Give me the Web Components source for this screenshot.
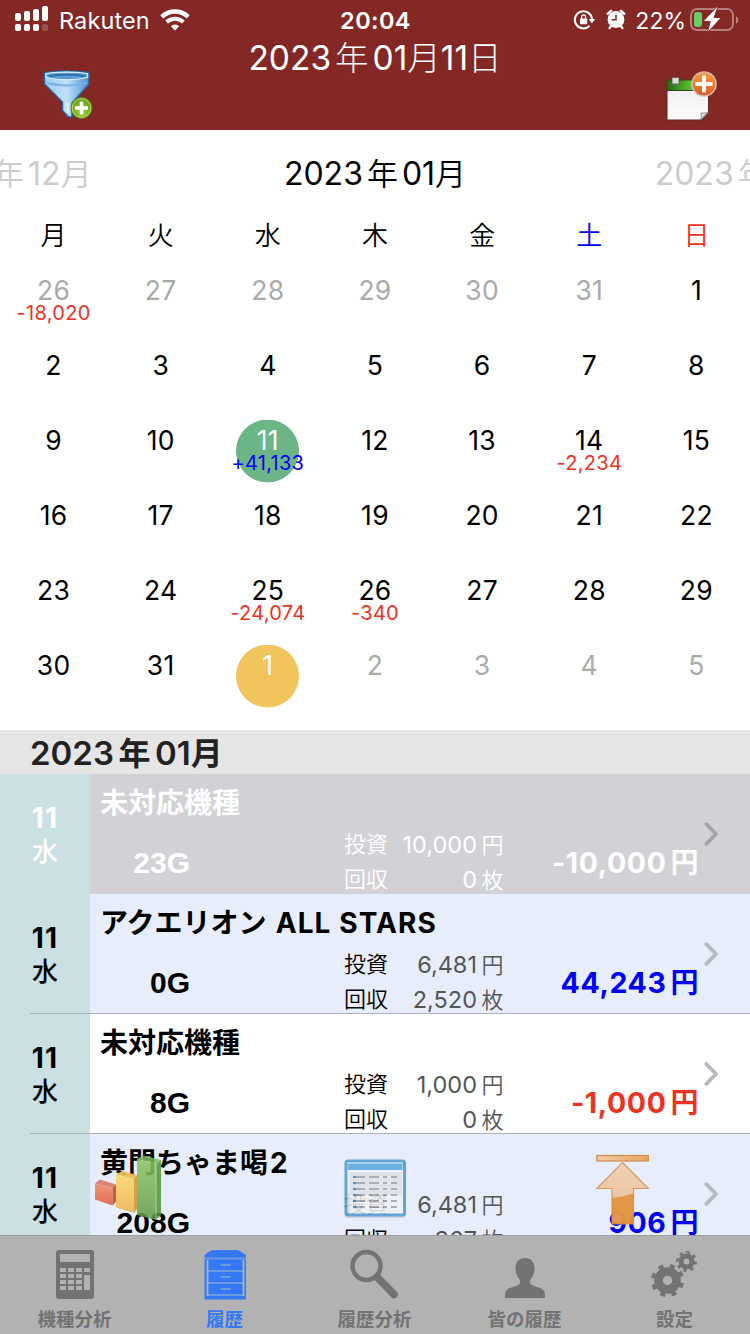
<!DOCTYPE html>
<html lang="ja">
<head>
<meta charset="utf-8">
<title>履歴</title>
<style>
  body {
    margin: 0;
    width: 750px;
    height: 1334px;
    overflow: hidden;
    background: #fff;
    font-family: Inter, "Noto Sans CJK JP", sans-serif;
  }
</style>
</head>
<body>
<history-app></history-app>

<script>
const ICONS = {
  signal: `<svg width="34" height="26" viewBox="0 0 34 26" fill="#fff">
    <rect x="0" y="7" width="6" height="8" rx="2"/><rect x="9" y="5" width="6" height="10" rx="2"/>
    <rect x="18" y="3" width="6" height="12" rx="2"/><rect x="27" y="0" width="6" height="15" rx="2"/>
    <rect x="0" y="18" width="6" height="7" rx="2"/><rect x="9" y="18" width="6" height="7" rx="2"/>
    <rect x="18" y="18" width="6" height="7" rx="2"/><rect x="27" y="18" width="6" height="7" rx="2" opacity=".2"/>
  </svg>`,
  wifi: `<svg width="30" height="22" viewBox="0 0 30 22" fill="none" stroke="#fff">
    <path d="M1.800 7.800a19 19 0 0 1 26.400 0" stroke-width="4.400"/>
    <path d="M6.600 13a12.200 12.200 0 0 1 16.800 0" stroke-width="4"/>
    <path d="M10.800 17.200a6.200 6.200 0 0 1 8.400 0L15 21.600z" fill="#fff" stroke="none"/>
  </svg>`,
  lock: `<svg width="22" height="20" viewBox="0 0 22 20">
    <path d="M15.600 15.800A8.600 8.600 0 1 1 18 9" fill="none" stroke="#fff" stroke-width="2"/>
    <path d="M14.600 9h6.600l-3.300 4.200z" fill="#fff"/>
    <rect x="6" y="8.600" width="7.200" height="5.600" rx="1" fill="#fff"/>
    <path d="M7.600 9V7a2 2 0 0 1 4 0v2" fill="none" stroke="#fff" stroke-width="1.300"/>
  </svg>`,
  alarm: `<svg width="20" height="20" viewBox="0 0 20 20">
    <circle cx="10" cy="10.500" r="8.400" fill="#fff"/>
    <path d="M1.600 4.800L5 1.800M18.400 4.800L15 1.800M3.600 19l2-2.600M16.400 19l-2-2.600" stroke="#fff" stroke-width="2.400" stroke-linecap="round"/>
    <path d="M10 5.400v5.400H5.600" fill="none" stroke="#832825" stroke-width="1.500"/>
  </svg>`,
  battery: `<svg width="50" height="26" viewBox="0 0 50 26">
    <rect x="1" y="2" width="42" height="21" rx="6" fill="none" stroke="#b57f7d" stroke-width="2"/>
    <path d="M46 9v8q2.400-1.400 2.400-4T46 9z" fill="#b57f7d"/>
    <rect x="4" y="5" width="8" height="15" rx="3" fill="#67ce67"/>
    <path d="M27 -.5L13 14.500h7.200L17.200 26 31.500 10.500h-7.400L28 -.5z" fill="#fff" stroke="#832825" stroke-width="1"/>
  </svg>`,
  filter: `<svg width="52" height="52" viewBox="0 0 52 52">
    <defs>
      <linearGradient id="f" x1="0" x2="1"><stop offset="0" stop-color="#9ccbf0"/><stop offset=".5" stop-color="#c0e0f8"/><stop offset="1" stop-color="#4e90cf"/></linearGradient>
      <radialGradient id="g" cx=".5" cy=".7"><stop offset="0" stop-color="#a4cc3a"/><stop offset="1" stop-color="#6fa81f"/></radialGradient>
    </defs>
    <path d="M1.500 2.500Q24 -.5 46 2.500V14L29 33v14.500l-4-1-5.500-6V32L1.500 14z" fill="url(#f)" stroke="#27639f" stroke-width="1.400"/>
    <path d="M3 3.500Q24 .8 44.500 3.500V7.500Q24 12 3 7.500z" fill="#5d9cd0" stroke="#d9effc" stroke-width="1.200"/>
    <path d="M6 6Q24 3.500 42 6" stroke="#2f6ea8" stroke-width="2" fill="none"/>
    <path d="M4 13Q24 18 44 13" stroke="#79b2e3" stroke-width="2" fill="none"/>
    <path d="M23 32v9l3 3V32z" fill="#d5ebfb"/>
    <circle cx="38.500" cy="38" r="10.500" fill="url(#g)" stroke="#558414" stroke-width="1"/>
    <circle cx="38.500" cy="38" r="9.300" fill="none" stroke="#b6d863" stroke-width="1"/>
    <path d="M38.500 31.500v13M32 38h13" stroke="#fff" stroke-width="3.600"/>
  </svg>`,
  addDay: `<svg width="52" height="52" viewBox="0 0 52 52">
    <defs>
      <linearGradient id="p" x2="0" y2="1"><stop offset="0" stop-color="#f0f0f0"/><stop offset="1" stop-color="#fdfdfd"/></linearGradient>
      <linearGradient id="h" x1="0" x2="1"><stop offset="0" stop-color="#256b18"/><stop offset=".6" stop-color="#62c52f"/><stop offset="1" stop-color="#4fae23"/></linearGradient>
      <linearGradient id="o" x2="0" y2="1"><stop offset="0" stop-color="#f0a03c"/><stop offset="1" stop-color="#df5527"/></linearGradient>
    </defs>
    <path d="M1 20H42.500v22l-8 8H1z" fill="url(#p)" stroke="#5c2422" stroke-width="1"/>
    <path d="M1 10H42.500V20.500H1z" fill="url(#h)" stroke="#2c4812" stroke-width="1"/>
    <path d="M42.500 42l-8 8q1.500-4 .5-7 4 .8 7.500-1z" fill="#ddd" stroke="#777" stroke-width=".8"/>
    <rect x="6" y="7.500" width="7" height="6.500" fill="#ddd" stroke="#555" stroke-width=".8"/>
    <circle cx="38" cy="14" r="12" fill="url(#o)" stroke="#d4bdb2" stroke-width="1.600"/>
    <path d="M38 5.500v17M29.500 14h17" stroke="#fff" stroke-width="3.800"/>
  </svg>`,
  chevron: `<svg width="18" height="28" viewBox="0 0 18 28" fill="none" stroke="currentColor" stroke-width="3.800" stroke-linecap="round" stroke-linejoin="round">
    <path d="M4.300 4L14 14 4.300 24"/>
  </svg>`,
  bars: `<svg width="68" height="68" viewBox="0 0 68 68">
    <defs>
      <linearGradient id="r" x2="0" y2="1"><stop offset="0" stop-color="#f0936a"/><stop offset="1" stop-color="#e2634e"/></linearGradient>
      <linearGradient id="y" x2="0" y2="1"><stop offset="0" stop-color="#f8da70"/><stop offset="1" stop-color="#efb75a"/></linearGradient>
      <linearGradient id="n" x2="0" y2="1"><stop offset="0" stop-color="#8cc563"/><stop offset="1" stop-color="#629b47"/></linearGradient>
    </defs>
    <g opacity=".94">
      <path d="M1 28.500l5-4 16 5-3.500 3.500z" fill="#d98069"/><path d="M1 28.500l17.500 4.500v17.500L1 44.500z" fill="url(#r)"/><path d="M18.500 33l3.500-3.500v17l-3.500 4z" fill="#c7503f"/>
      <path d="M22 19.500L28 16l15 4-3 4z" fill="#e9be52"/><path d="M22 19.500l18 4.500v34L22 52.500z" fill="url(#y)"/><path d="M40 24l3-4v34l-3 4z" fill="#d79c40"/>
    </g>
    <g opacity=".86">
      <path d="M43 4l6-3.500L67 5l-5 4z" fill="#79b85a"/><path d="M43 4l19 5v56l-19-5z" fill="url(#n)"/><path d="M62 9l5-4v55l-5 5z" fill="#4f973a"/>
      <path d="M43 4l19 5v55" fill="none" stroke="#a5cf86" stroke-width="1"/>
    </g>
  </svg>`,
  table: `<svg width="64" height="62" viewBox="0 0 64 62">
    <g opacity=".88">
      <rect x="1" y="4" width="61" height="55" rx="3" fill="#8c99b4" opacity=".35"/>
      <rect x="2" y="2" width="58.500" height="54" rx="2" fill="#f2f5fa" stroke="#509cce" stroke-width="3"/>
      <rect x="4" y="3.500" width="54.500" height="7.500" fill="#5ba8de"/><path d="M3.500 4h55.500" stroke="#9dd0ef" stroke-width="2"/>
      <rect x="5" y="13" width="53" height="39" fill="#dfe1e7"/><rect x="5" y="36" width="53" height="17" fill="#eff1f5"/>
      <g stroke="#a3a6ae" stroke-width="2.200">
        ${[18, 24, 30, 36, 42, 48].map(y => `<path d="M12 ${y}h9M25 ${y}h10M39 ${y}h4M47 ${y}h6"/><path d="M9 ${y}h3" stroke="#3f86d2"/>`).join('')}
      </g>
    </g>
  </svg>`,
  toTop: `<svg width="54" height="72" viewBox="0 0 54 72">
    <defs>
      <linearGradient id="t" x1="0" x2="1"><stop offset="0" stop-color="#f1c9a4"/><stop offset="1" stop-color="#e6a75c"/></linearGradient>
      <linearGradient id="u" x2="0" y2="1"><stop offset="0" stop-color="#f2cdb0"/><stop offset="1" stop-color="#ebb578"/></linearGradient>
    </defs>
    <rect x=".8" y="1.500" width="51.500" height="5.500" fill="url(#t)" stroke="#cf8d52" stroke-width="1.200"/>
    <path d="M26.500 8.500L52.300 34.500H37.500V70H16V34.500H.8z" fill="url(#u)" stroke="#d48f4e" stroke-width="1.200" opacity=".85"/>
    <path d="M16 44q12-1 21.500-5v31H16z" fill="#dd8c32" opacity=".8"/>
    <circle cx="21" cy="64" r="5" fill="#e89b62" opacity=".5"/>
  </svg>`,
  calc: `<svg width="50" height="52" viewBox="0 0 50 52">
    <rect x="6" y="1" width="38" height="49" rx="3" fill="currentColor"/>
    <g fill="#b2b2b2">
      <rect x="10" y="5" width="30" height="8"/>
      ${[19, 25, 31, 37].map(y => `<rect x="10" y="${y}" width="6" height="4"/><rect x="18" y="${y}" width="6" height="4"/><rect x="26" y="${y}" width="6" height="4"/>`).join('')}
      <rect x="34" y="19" width="6" height="4"/><rect x="34" y="26" width="6" height="15"/>
    </g>
  </svg>`,
  drawers: `<svg width="50" height="52" viewBox="0 0 50 52">
    <path d="M4.500 6l7.500-5h26l8 5v44.500H4.500z" fill="currentColor"/>
    <path d="M4.500 9.500h41.500M8 22h35M8 34h35M8 46h35M20.500 16h10M20.500 28h10M20.500 40h10" stroke="#6a9cdf" stroke-width="1.800"/>
    <path d="M7.500 11v36M43.500 11v36" stroke="#a9b6cc" stroke-width="1.800"/>
  </svg>`,
  search: `<svg width="50" height="52" viewBox="0 0 50 52" fill="none" stroke="currentColor">
    <circle cx="16.500" cy="17" r="14" stroke-width="4.400"/>
    <path d="M27 28L44 45.500" stroke-width="7.600" stroke-linecap="round"/>
  </svg>`,
  person: `<svg width="50" height="52" viewBox="0 0 50 52">
    <path d="M25 9c6 0 9.500 4 9.500 10.500 0 5-2 8.500-4.500 11.500v2.500c0 1.500 1 2.300 3 3l7 2.500c3.500 1.300 5 3.500 5 7V49H5v-3c0-3.500 1.500-5.700 5-7l7-2.500c2-.7 3-1.500 3-3V31c-2.500-3-4.500-6.500-4.500-11.500C15.500 13 19 9 25 9z" fill="currentColor"/>
  </svg>`,
  gears: `<svg width="50" height="52" viewBox="0 0 50 52" fill="none" stroke="currentColor">
    <circle cx="17.500" cy="31.500" r="9" stroke-width="8.600"/>
    <circle cx="17.500" cy="31.500" r="14.600" stroke-width="4" pathLength="80" stroke-dasharray="4.400 5.600" stroke-dashoffset="-2"/>
    <circle cx="36.500" cy="12.500" r="5.500" stroke-width="5"/>
    <circle cx="36.500" cy="12.500" r="9" stroke-width="3" pathLength="80" stroke-dasharray="4.500 5.500"/>
  </svg>`
}

// wraps unit characters, which sit a little apart from the digits beside them
const units = text => text.replace(/[年月日円枚]/g, char => `<span class="${char === '年' ? 'unit year' : 'unit'}">${char}</span>`)

class AppIcon extends HTMLElement {
  constructor () {
    super()
    this.attachShadow({ mode: 'open' })
  }

  connectedCallback () {
    this.shadowRoot.innerHTML = `
      <style>
        :host { display: block; flex: none; }
        svg { display: block; overflow: visible; }
      </style>
      ${ICONS[this.getAttribute('name')]}
    `
  }
}

class StatusBar extends HTMLElement {
  constructor () {
    super()
    this.attachShadow({ mode: 'open' })
  }

  connectedCallback () {
    this.shadowRoot.innerHTML = `
      <style>
        :host {
          display: grid;
          grid-template-columns: 1fr auto 1fr;
          height: 40px;
          line-height: 41px;
          font-size: 23.5px;
          color: #fff;
        }
        .side { display: flex; }
        .left { padding-left: 15px; }
        .right { justify-content: flex-end; padding-right: 10px; }
        .signal { margin: 6px 10px 0 0; }
        .carrier { width: 100.5px; letter-spacing: 0.1px; }
        .wifi { margin-top: 9px; }
        .time { font-weight: 600; letter-spacing: 0.4px; padding-left: 1px; }
        .lock { margin: 10px 10px 0 0; }
        .alarm { margin: 9px 9px 0 0; }
        .percent { margin-right: 4px; font-size: 23px; line-height: 42px; }
        .battery { margin-top: 7px; }
      </style>
      <div class="side left">
        <app-icon class="signal" name="signal"></app-icon>
        <span class="carrier">Rakuten</span>
        <app-icon class="wifi" name="wifi"></app-icon>
      </div>
      <span class="time">20:04</span>
      <div class="side right">
        <app-icon class="lock" name="lock"></app-icon>
        <app-icon class="alarm" name="alarm"></app-icon>
        <span class="percent">22%</span>
        <app-icon class="battery" name="battery"></app-icon>
      </div>
    `
  }
}

class NavHeader extends HTMLElement {
  constructor () {
    super()
    this.attachShadow({ mode: 'open' })
  }

  connectedCallback () {
    this.shadowRoot.innerHTML = `
      <style>
        :host { display: block; height: 130px; background: #832825; color: #fff; }
        .nav { display: grid; grid-template-columns: 1fr auto 1fr; }
        .title { line-height: 37px; font-size: 33.5px; }
        .unit { font-weight: 300; }
        .year { margin: 0 4px; }
        app-icon { margin: 30px 0 0 43px; }
        app-icon:last-child { justify-self: end; margin: 30px 32px 0 0; }
      </style>
      <status-bar></status-bar>
      <div class="nav">
        <app-icon name="filter"></app-icon>
        <span class="title">${units(this.getAttribute('date'))}</span>
        <app-icon name="addDay"></app-icon>
      </div>
    `
  }
}

class CalendarDay extends HTMLElement {
  constructor () {
    super()
    this.attachShadow({ mode: 'open' })
  }

  connectedCallback () {
    const sum = this.getAttribute('sum') || ''
    this.shadowRoot.innerHTML = `
      <style>
        :host {
          display: flex;
          flex-direction: column;
          align-items: center;
          height: 75px;
          padding-top: 5px;
          box-sizing: border-box;
          font-size: 26.5px;
          color: #000;
          background: radial-gradient(circle 32px at 50% 31px, var(--dot, transparent) 31px, transparent 31.8px);
        }
        :host([out]) { color: #aaa; }
        :host([mark=today]) { --dot: #f2c55c; color: #fff; }
        :host([mark=selected]) { --dot: #6cb587; color: #fff; }
        .day { line-height: 31px; letter-spacing: 0.3px; }
        .sum {
          line-height: 15px;
          font-size: 20px;
          letter-spacing: 0.3px;
          white-space: nowrap;
          color: ${sum[0] === '+' ? '#0000f5' : '#ea3323'};
        }
      </style>
      <span class="day"><slot></slot></span>
      <span class="sum">${sum}</span>
    `
  }
}

class MonthCalendar extends HTMLElement {
  constructor () {
    super()
    this.attachShadow({ mode: 'open' })
  }

  connectedCallback () {
    const sums = { 0: '-18,020', 16: '+41,133', 19: '-2,234', 30: '-24,074', 31: '-340' }
    const marks = { 16: 'selected', 37: 'today' }
    let days = ''
    for (let i = 0; i < 42; i++) {
      const date = new Date(2022, 11, 26 + i)
      days += `<calendar-day ${date.getMonth() !== 0 ? 'out' : ''}
        ${sums[i] ? `sum="${sums[i]}"` : ''} ${marks[i] ? `mark="${marks[i]}"` : ''}>${date.getDate()}</calendar-day>`
    }
    this.shadowRoot.innerHTML = `
      <style>
        :host { display: block; height: 600px; overflow: hidden; background: #fff; }
        .months { display: flex; justify-content: center; line-height: 88px; font-size: 32px; }
        .months div { flex: none; width: 374px; text-align: center; color: #ccc; }
        .months .current { color: #000; }
        .unit { font-size: 31px; font-weight: 350; }
        .year { margin: 0 4px; }
        .week, .days { display: grid; grid-template-columns: repeat(7, 1fr); }
        .week { height: 52px; line-height: 36px; font-size: 26px; font-weight: 350; text-align: center; }
        .sat { color: #0000f5; }
        .sun { color: #ea3323; }
      </style>
      <div class="months">
        <div>${units('2022年12月')}</div><div class="current">${units('2023年01月')}</div><div>${units('2023年02月')}</div>
      </div>
      <div class="week">
        <span>月</span><span>火</span><span>水</span><span>木</span><span>金</span><span class="sat">土</span><span class="sun">日</span>
      </div>
      <div class="days">${days}</div>
    `
  }
}

class HistoryRow extends HTMLElement {
  constructor () {
    super()
    this.attachShadow({ mode: 'open' })
  }

  connectedCallback () {
    const get = name => this.getAttribute(name)
    this.shadowRoot.innerHTML = `
      <style>
        :host {
          display: flex;
          height: 120px;
          overflow: hidden;
          color: #000;
          background: linear-gradient(#a9b1ba, #a9b1ba) 30px 119px / 100% 1px no-repeat, linear-gradient(90deg, #cbe0e3 90px, var(--row, #fff) 90px);
          --minor: #555;
          --arrow: #b5b8c1;
        }
        :host([tint]) { --row: #e7edfb; }
        :host([selected]) {
          color: #fff;
          background: linear-gradient(90deg, #cbe0e3 90px, #d1d1d6 90px);
          --minor: #fff;
          --arrow: #a3a3a8;
        }
        .date {
          display: flex;
          flex-direction: column;
          width: 90px;
          padding-top: 28px;
          box-sizing: border-box;
          text-align: center;
          font-size: 28px;
          line-height: 33px;
          font-weight: 700;
        }
        .date span:first-child { letter-spacing: 1.2px; }
        .date span:last-child { font-size: 26px; font-weight: 500; }
        .info { width: 610px; }
        .name {
          height: 53.5px;
          padding-left: 10px;
          line-height: 58px;
          font-size: 28px;
          font-weight: 600;
          white-space: nowrap;
        }
        ::slotted(b) { font-weight: 700; margin-left: 2px; letter-spacing: 1.1px; }
        .detail { display: flex; align-items: center; height: 70px; }
        .games {
          width: 100px;
          text-align: right;
          font: bold 30px/70px "Liberation Sans", sans-serif;
        }
        .table {
          display: grid;
          grid-template-columns: 44px 115.5px;
          grid-auto-rows: 35px;
          margin: -1px 0 0 154px;
          line-height: 35px;
          font-size: 22px;
          font-weight: 350;
        }
        .table .value {
          text-align: right;
          font-size: 23.5px;
          font-weight: 400;
          color: var(--minor);
        }
        .value .unit { margin-left: 4.5px; font-size: 22px; font-weight: 350; line-height: 1; }
        .yen {
          flex: 1;
          margin: -4px 1.5px 0 0;
          text-align: right;
          font-size: 28.5px;
          font-weight: 700;
          letter-spacing: 0.6px;
          color: ${get('selected') !== null ? '#fff' : get('total')[0] === '-' ? '#ea3323' : '#0000f5'};
        }
        .yen .unit { margin-left: 4px; font-size: 28px; font-weight: 600; letter-spacing: 0; }
        .arrow { margin: 46px 0 0 2px; color: var(--arrow); }
      </style>
      <div class="date"><span>11</span><span>水</span></div>
      <div class="info">
        <div class="name"><slot></slot></div>
        <div class="detail">
          <span class="games">${get('games')}</span>
          <div class="table">
            <span>投資</span><span class="value">${units(get('spent'))}</span>
            <span>回収</span><span class="value">${units(get('won'))}</span>
          </div>
          <span class="yen">${units(get('total'))}</span>
        </div>
      </div>
      <app-icon class="arrow" name="chevron"></app-icon>
    `
  }
}

class HistoryList extends HTMLElement {
  constructor () {
    super()
    this.attachShadow({ mode: 'open' })
  }

  connectedCallback () {
    this.shadowRoot.innerHTML = `
      <style>
        :host { display: block; position: relative; height: 505px; overflow: hidden; }
        h2 {
          margin: 0;
          padding-left: 30px;
          height: 44px;
          line-height: 46px;
          font-size: 33px;
          font-weight: 600;
          color: #222;
          background: #e5e5e5;
        }
        .unit { font-size: 32px; }
        .year { margin: 0 4.5px; }
        /* translucent shortcuts floating over the last row */
        .float { position: absolute; }
      </style>
      <h2>${units(this.getAttribute('month'))}</h2>
      <slot></slot>
      <app-icon class="float" style="left: 94px; top: 425px" name="bars"></app-icon>
      <app-icon class="float" style="left: 344px; top: 429px" name="table"></app-icon>
      <app-icon class="float" style="left: 596px; top: 424px" name="toTop"></app-icon>
    `
  }
}

class TabItem extends HTMLElement {
  constructor () {
    super()
    this.attachShadow({ mode: 'open' })
  }

  connectedCallback () {
    this.shadowRoot.innerHTML = `
      <style>
        :host {
          display: flex;
          flex-direction: column;
          align-items: center;
          flex: 1;
          padding: 13px 1px 0 0;
          line-height: 36px;
          font-size: 18.5px;
          font-weight: 600;
          color: #737373;
        }
        :host([active]) { color: #3478f6; }
      </style>
      <app-icon name="${this.getAttribute('icon')}"></app-icon>
      <slot></slot>
    `
  }
}

class TabBar extends HTMLElement {
  constructor () {
    super()
    this.attachShadow({ mode: 'open' })
  }

  connectedCallback () {
    this.shadowRoot.innerHTML = `
      <style>
        :host {
          display: flex;
          height: 99px;
          box-sizing: border-box;
          border-top: 1px solid #9a9da3;
          background: #b2b2b2;
        }
      </style>
      <slot></slot>
    `
  }
}

class HistoryApp extends HTMLElement {
  constructor () {
    super()
    this.attachShadow({ mode: 'open' })
  }

  connectedCallback () {
    this.shadowRoot.innerHTML = `
      <style>
        :host { display: flex; flex-direction: column; width: 750px; height: 1334px; overflow: hidden; }
      </style>
      <nav-header date="2023年01月11日"></nav-header>
      <month-calendar></month-calendar>
      <history-list month="2023年01月">
        <history-row selected games="23G" spent="10,000円" won="0枚" total="-10,000円">未対応機種</history-row>
        <history-row tint games="0G" spent="6,481円" won="2,520枚" total="44,243円">アクエリオン <b>ALL STARS</b></history-row>
        <history-row games="8G" spent="1,000円" won="0枚" total="-1,000円">未対応機種</history-row>
        <history-row tint games="208G" spent="6,481円" won="367枚" total="906円">黄門ちゃま喝<b>2</b></history-row>
      </history-list>
      <tab-bar>
        <tab-item icon="calc">機種分析</tab-item>
        <tab-item icon="drawers" active>履歴</tab-item>
        <tab-item icon="search">履歴分析</tab-item>
        <tab-item icon="person">皆の履歴</tab-item>
        <tab-item icon="gears">設定</tab-item>
      </tab-bar>
    `
  }
}

customElements.define('app-icon', AppIcon)
customElements.define('status-bar', StatusBar)
customElements.define('nav-header', NavHeader)
customElements.define('calendar-day', CalendarDay)
customElements.define('month-calendar', MonthCalendar)
customElements.define('history-row', HistoryRow)
customElements.define('history-list', HistoryList)
customElements.define('tab-item', TabItem)
customElements.define('tab-bar', TabBar)
customElements.define('history-app', HistoryApp)
</script>
</body>
</html>
